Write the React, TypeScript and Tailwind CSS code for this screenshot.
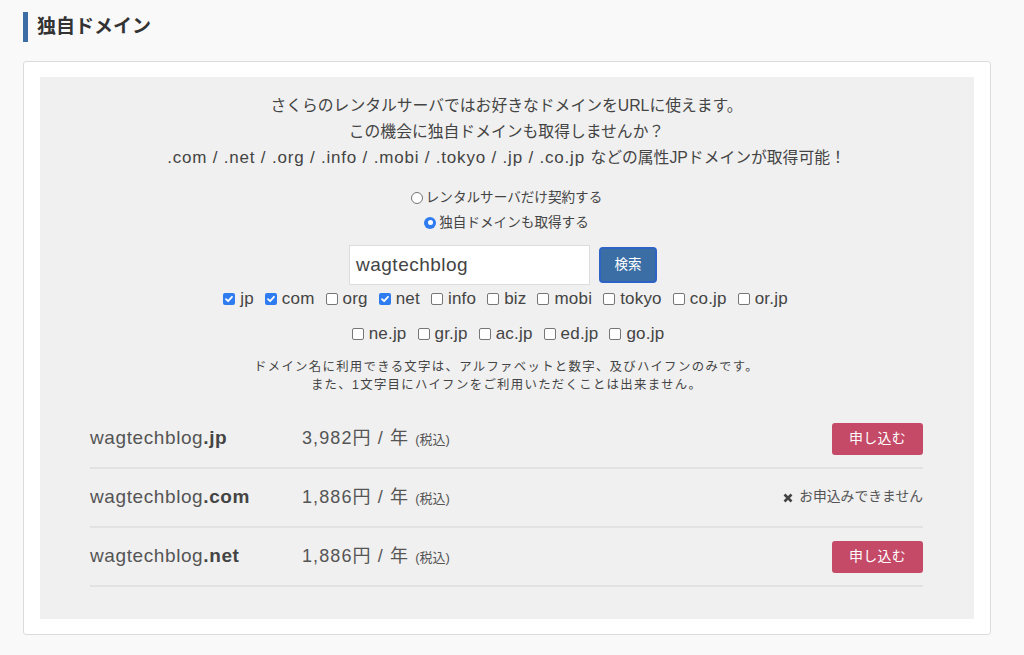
import React from "react";

const font = { fontFamily: '"Liberation Sans", "Noto Sans CJK JP", sans-serif' };

function L({ children }: { children: React.ReactNode }) {
  return <span className="text-[17px] tracking-[0.8px]">{children}</span>;
}

function Box({ checked }: { checked?: boolean }) {
  return checked ? (
    <span className="inline-flex h-[12px] w-[12px] shrink-0 items-center justify-center rounded-[2px] bg-[#2f7cf0]">
      <svg width="10" height="10" viewBox="0 0 10 10">
        <path d="M2 5.2 L4.1 7.2 L8 2.8" stroke="white" strokeWidth="1.8" fill="none" strokeLinecap="round" strokeLinejoin="round" />
      </svg>
    </span>
  ) : (
    <span className="inline-block h-[12px] w-[12px] shrink-0 rounded-[2px] border border-[#767676] bg-white" />
  );
}

function Check({ label, checked }: { label: string; checked?: boolean }) {
  return (
    <span className="inline-flex items-center gap-[5px]">
      <Box checked={checked} />
      <span className="tracking-[0.2px]">{label}</span>
    </span>
  );
}

function Radio({ checked }: { checked?: boolean }) {
  return checked ? (
    <span className="inline-flex h-[12px] w-[12px] items-center justify-center rounded-full bg-[#2f7cf0]">
      <span className="h-[5px] w-[5px] rounded-full bg-white" />
    </span>
  ) : (
    <span className="inline-block h-[12px] w-[12px] rounded-full border border-[#767676] bg-white" />
  );
}

function Row({ name, tld, price, ok }: { name: string; tld: string; price: string; ok: boolean }) {
  return (
    <div className="flex h-[59px] items-center border-b-2 border-[#e2e2e2] text-[#444]">
      <div className="w-[212px] text-[19px] tracking-[0.6px] text-[#555]">
        {name}
        <span className="font-bold text-[#444]">{tld}</span>
      </div>
      <div className="flex-1 text-[18px] tracking-[1.1px] text-[#555]">
        {price}円 / 年 <span className="text-[13px] tracking-normal">(税込)</span>
      </div>
      {ok ? (
        <div className="flex h-[32px] w-[91px] items-center justify-center rounded-[3px] bg-[#c44a68] text-[14px] tracking-[0.3px] text-white">
          申し込む
        </div>
      ) : (
        <div className="flex items-center gap-[6px] text-[13.8px] text-[#555]">
          <svg width="10" height="10" viewBox="0 0 10 10">
            <path d="M1.5 1.5 L8.5 8.5 M8.5 1.5 L1.5 8.5" stroke="#444" strokeWidth="2.6" strokeLinecap="butt" />
          </svg>
          <span>お申込みできません</span>
        </div>
      )}
    </div>
  );
}

export default function App() {
  return (
    <div className="h-[655px] w-[1024px] overflow-hidden bg-[#f9f9f9]" style={font}>
      <div className="flex items-center pl-[23px] pt-[12px]">
        <span className="h-[30px] w-[5px] bg-[#3c6ea5]" />
        <h2 className="pl-[9px] text-[19px] font-bold text-[#333]">独自ドメイン</h2>
      </div>
      <div className="ml-[23px] mt-[19px] w-[968px] rounded-[3px] border border-[#dcdcdc] bg-white px-[16px] pb-[15px] pt-[15px]">
        <div className="bg-[#f0f0f0] pb-[32px] pl-[50px] pr-[51px] pt-[16px]">
          <div className="text-center text-[15.8px] leading-[26px] text-[#444]">
            <p>さくらのレンタルサーバではお好きなドメインをURLに使えます。</p>
            <p>この機会に独自ドメインも取得しませんか？</p>
            <p>
              <L>.com / .net / .org / .info / .mobi / .tokyo / .jp / .co.jp </L>などの属性JPドメインが取得可能！
            </p>
          </div>
          <div className="mt-[14px] flex flex-col items-center text-[13.6px] leading-[25px] text-[#444]">
            <span className="inline-flex items-center gap-[3px]">
              <Radio />
              レンタルサーバだけ契約する
            </span>
            <span className="inline-flex items-center gap-[3px]">
              <Radio checked />
              独自ドメインも取得する
            </span>
          </div>
          <div className="mt-[10px] flex justify-center gap-[9px] pr-[7px]">
            <div className="flex h-[40px] w-[241px] items-center border border-[#ddd] bg-white px-[6px] text-[19px] tracking-[0.5px] text-[#444]">
              wagtechblog
            </div>
            <div className="mt-[2px] flex h-[36px] w-[58px] items-center justify-center rounded-[4px] border-2 border-[#2c63c4] bg-[#3a6ea5] text-[13.5px] text-white">
              検索
            </div>
          </div>
          <div className="mt-[2px] flex justify-center gap-x-[11px] pr-[2px] text-[17px] leading-[24px] text-[#444]">
            <Check label="jp" checked />
            <Check label="com" checked />
            <Check label="org" />
            <Check label="net" checked />
            <Check label="info" />
            <Check label="biz" />
            <Check label="mobi" />
            <Check label="tokyo" />
            <Check label="co.jp" />
            <Check label="or.jp" />
          </div>
          <div className="mt-[11px] flex justify-center gap-x-[11px] pl-[3px] text-[17px] leading-[24px] text-[#444]">
            <Check label="ne.jp" />
            <Check label="gr.jp" />
            <Check label="ac.jp" />
            <Check label="ed.jp" />
            <Check label="go.jp" />
          </div>
          <div className="mt-[12px] text-center text-[12.4px] leading-[18px] tracking-[1.3px] text-[#444]">
            <p>ドメイン名に利用できる文字は、アルファベットと数字、及びハイフンのみです。</p>
            <p>また、1文字目にハイフンをご利用いただくことは出来ません。</p>
          </div>
          <div className="mt-[16px]">
            <Row name="wagtechblog" tld=".jp" price="3,982" ok />
            <Row name="wagtechblog" tld=".com" price="1,886" ok={false} />
            <Row name="wagtechblog" tld=".net" price="1,886" ok />
          </div>
        </div>
      </div>
    </div>
  );
}
